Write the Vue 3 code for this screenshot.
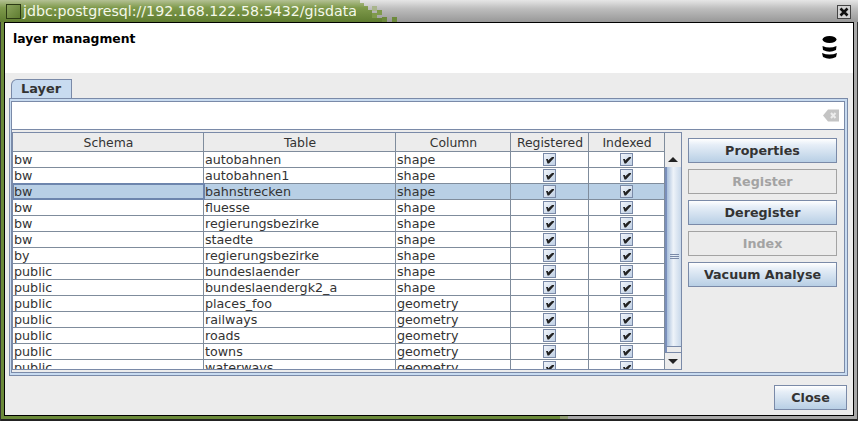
<template>
  <div class="window">
    <div class="titlebar">
      <div class="title-green">
        <span class="app-icon"></span>
        <span class="title">jdbc:postgresql://192.168.122.58:5432/gisdata</span>
      </div>
      <svg class="dither" width="42" height="22" viewBox="0 0 42 22">
        <defs>
          <linearGradient id="olive" x1="0" y1="0" x2="0" y2="22" gradientUnits="userSpaceOnUse">
            <stop offset="0" stop-color="#b4c194" />
            <stop offset="0.35" stop-color="#7f9a4c" />
            <stop offset="1" stop-color="#5f7c30" />
          </linearGradient>
        </defs>
        <path d="M0 0 H4 V3 H8 V6 H12 V10 H16 V14 H20 V18 H26 V22 H0 Z" fill="url(#olive)" />
        <rect v-for="(d, i) in ditherSquares" :key="i" :x="d[0]" :y="d[1]" width="5" height="5" :fill="d[2]" />
      </svg>
      <span class="close-x">
        <svg width="10" height="10" viewBox="0 0 10 10">
          <path d="M1.5 1.5 L8.5 8.5 M8.5 1.5 L1.5 8.5" stroke="#111" stroke-width="2.6" />
        </svg>
      </span>
    </div>
    <div class="content">
      <div class="header">
        <div class="header-title">layer managment</div>
        <svg class="db-icon" width="15" height="23" viewBox="0 0 15 23">
          <ellipse cx="7.5" cy="3.5" rx="7" ry="3.5" fill="#000" />
          <path d="M0.5 10 Q7.5 13 14.5 10 L14 14 Q7.5 17.5 1 14 Z" fill="#000" />
          <path d="M0 17 Q7.5 20 15 17 L14 21 Q7.5 24.5 1 21 Z" fill="#000" />
        </svg>
      </div>
      <div class="main">
        <div class="tab-row">
          <div class="tab">Layer</div>
        </div>
        <div class="tab-pane">
          <div class="pane-inner">
            <div class="search">
              <svg class="clear-icon" width="16" height="13" viewBox="0 0 16 13">
                <path d="M0 6.5 L5 0.5 H16 V12.5 H5 Z" fill="#c4c4c4" />
                <path d="M8 4 L12.5 9 M12.5 4 L8 9" stroke="#ececec" stroke-width="2" />
              </svg>
            </div>
            <div class="split">
              <div class="table-box">
                <div class="table-wrap">
                  <div class="row head">
                    <div v-for="h in headers" :key="h" class="cell">{{ h }}</div>
                  </div>
                  <div v-for="(r, i) in rows" :key="i" class="row" :class="{ selected: i === 2 }">
                    <div class="cell first">{{ r[0] }}</div>
                    <div class="cell">{{ r[1] }}</div>
                    <div class="cell">{{ r[2] }}</div>
                    <div v-for="c in 2" :key="c" class="cell check">
                      <span class="box">
                        <svg width="11" height="11" viewBox="0 0 11 11">
                          <path d="M2 5 H4 V6.5 L8 3 H10 V4 L5 9.5 H3.5 Z" fill="#222" />
                        </svg>
                      </span>
                    </div>
                  </div>
                </div>
                <div class="scrollbar">
                  <div class="corner"></div>
                  <div class="arrow up"><i></i></div>
                  <div class="thumb"><b></b><b></b><b></b></div>
                  <div class="track"></div>
                  <div class="arrow down"><i></i></div>
                </div>
              </div>
              <div class="actions">
                <button class="btn">Properties</button>
                <button class="btn off">Register</button>
                <button class="btn">Deregister</button>
                <button class="btn off">Index</button>
                <button class="btn">Vacuum Analyse</button>
              </div>
            </div>
          </div>
        </div>
        <div class="footer">
          <button class="btn close">Close</button>
        </div>
      </div>
    </div>
  </div>
</template>

<script setup>
const headers = ['Schema', 'Table', 'Column', 'Registered', 'Indexed']

const rows = [
  ['bw', 'autobahnen', 'shape'],
  ['bw', 'autobahnen1', 'shape'],
  ['bw', 'bahnstrecken', 'shape'],
  ['bw', 'fluesse', 'shape'],
  ['bw', 'regierungsbezirke', 'shape'],
  ['bw', 'staedte', 'shape'],
  ['by', 'regierungsbezirke', 'shape'],
  ['public', 'bundeslaender', 'shape'],
  ['public', 'bundeslaendergk2_a', 'shape'],
  ['public', 'places_foo', 'geometry'],
  ['public', 'railways', 'geometry'],
  ['public', 'roads', 'geometry'],
  ['public', 'towns', 'geometry'],
  ['public', 'waterways', 'geometry'],
]

const ditherSquares = [
  [16, 6, '#a9b58c'],
  [16, 13, '#7f9a4c'],
  [21, 10, '#7f9a4c'],
  [26, 17, '#6d8a3c'],
  [36, 17, '#6d8a3c'],
]
</script>

<style>
html, body {
  margin: 0;
  background: #000;
  overflow: hidden;
}
</style>

<style scoped>
.window {
  width: 858px;
  height: 421px;
  box-sizing: border-box;
  display: flex;
  flex-direction: column;
  background: linear-gradient(90deg, #6b8a3a 560px, #8f9c72 560px, #8f9c72 568px, #a8a8a8 568px);
  box-shadow: inset 1px 0 0 #333, inset -1px 0 0 #333, inset 0 -2px 0 #222;
  font-family: "DejaVu Sans", sans-serif;
  font-size: 12.7px;
  color: #333;
}

.titlebar {
  height: 22px;
  flex: none;
  display: flex;
  background: linear-gradient(#e6e6e6, #bdbdbd 40%, #989898);
  position: relative;
}

.title-green {
  width: 360px;
  flex: none;
  display: flex;
  align-items: center;
  background: linear-gradient(#b4c194, #7f9a4c 35%, #5f7c30);
}

.app-icon {
  width: 15px;
  height: 15px;
  margin-left: 6px;
  box-sizing: border-box;
  border: 1px solid #2c3a14;
  background: linear-gradient(135deg, #8aa35c, #5f7c30);
  flex: none;
}

.title {
  padding-left: 2px;
  color: #f4f8ea;
  font-size: 14.2px;
  white-space: nowrap;
}

.dither {
  position: absolute;
  left: 356px;
  top: 0;
}

.close-x {
  position: absolute;
  right: 7px;
  top: 5px;
  width: 14px;
  height: 14px;
  box-sizing: border-box;
  border: 1px solid #444;
  display: flex;
  align-items: center;
  justify-content: center;
  background: #d2d2d2;
}

.content {
  flex: none;
  height: 394px;
  margin: 0 4px;
  border: 1px solid #000;
  box-sizing: border-box;
  background: #ececec;
  display: flex;
  flex-direction: column;
}

.header {
  height: 50px;
  flex: none;
  background: #fff;
  display: flex;
  justify-content: space-between;
  padding: 8px 16px 0 8px;
  box-sizing: border-box;
}

.header-title {
  font-weight: bold;
  font-size: 12.4px;
  color: #000;
}

.db-icon {
  margin-top: 5px;
}

.main {
  flex: 1;
  display: flex;
  flex-direction: column;
  min-height: 0;
}

.tab-row {
  padding: 6px 0 0 6px;
  display: flex;
  height: 25px;
  flex: none;
  box-sizing: border-box;
}

.tab {
  width: 61px;
  box-sizing: border-box;
  border: 1px solid #7a8aa8;
  border-bottom: none;
  border-top-left-radius: 6px;
  background: #c8dbf0;
  font-weight: bold;
  font-size: 12.9px;
  text-align: center;
  line-height: 18px;
  padding-right: 1px;
}

.tab-pane {
  flex: none;
  height: 278px;
  margin: 0 5px 0 4px;
  border: 1px solid #7a8aa8;
  background: #c8dbf0;
  padding: 2px 2px 2px 1px;
  box-sizing: border-box;
}

.pane-inner {
  height: 100%;
  box-sizing: border-box;
  border: 1px solid #7a8aa8;
  background: #ececec;
  display: flex;
  flex-direction: column;
}

.search {
  height: 28px;
  flex: none;
  border-bottom: 1px solid #7a8aa8;
  background: #fff;
  box-sizing: border-box;
  display: flex;
  align-items: center;
  justify-content: flex-end;
  padding-right: 5px;
}

.split {
  flex: 1;
  display: flex;
  min-height: 0;
}

.table-box {
  width: 670px;
  height: 238px;
  flex: none;
  margin-top: 2px;
  border: 1px solid #7a8aa8;
  box-sizing: border-box;
  display: flex;
  overflow: hidden;
}

.table-wrap {
  width: 652px;
  flex: none;
  background: #fff;
  overflow: hidden;
}

.row {
  display: grid;
  grid-template-columns: 191px 192px 115px 78px 76px;
  height: 16px;
  box-sizing: border-box;
  border-bottom: 1px solid #7f8c9c;
  line-height: 15px;
  color: #333;
}

.row.selected {
  background: #b8cfe5;
}

.cell {
  padding-left: 1px;
  border-right: 1px solid #7f8c9c;
  white-space: nowrap;
  overflow: hidden;
  box-sizing: border-box;
}

.row.selected .first {
  outline: 2px solid #6d85ad;
  outline-offset: -1px;
  overflow: visible;
}

.row.head {
  height: 19px;
  background: #ececec;
  line-height: 19px;
  font-size: 12.4px;
}

.head .cell {
  text-align: center;
  padding-left: 1px;
}

.check {
  display: flex;
  align-items: center;
  justify-content: center;
  padding-left: 0;
}

.box {
  width: 13px;
  height: 13px;
  box-sizing: border-box;
  border: 1px solid #7a8aa8;
  background: linear-gradient(135deg, #f0f4fa, #c0d0e4);
  display: flex;
  align-items: center;
  justify-content: center;
}

.scrollbar {
  width: 16px;
  flex: none;
  display: flex;
  flex-direction: column;
  background: #ececec;
}

.corner {
  height: 19px;
  flex: none;
}

.arrow {
  height: 15px;
  flex: none;
  display: flex;
  align-items: center;
  justify-content: center;
  box-sizing: border-box;
}

.arrow i {
  width: 0;
  height: 0;
  border-left: 5px solid transparent;
  border-right: 5px solid transparent;
}

.up i {
  border-bottom: 5px solid #222;
}

.down {
  border-top: 1px solid #7a8aa8;
  height: 17px;
}

.down i {
  border-top: 5px solid #222;
}

.thumb {
  height: 180px;
  flex: none;
  box-sizing: border-box;
  border-left: 2px solid #7a8fbb;
  border-bottom: 1px solid #7a8aa8;
  background: linear-gradient(90deg, #a9c0dc, #eef3f9 45%, #c8d8ea);
  display: flex;
  flex-direction: column;
  justify-content: center;
  align-items: center;
  gap: 1px;
}

.track {
  flex: 1;
  border-left: 2px solid #7a8fbb;
}

.thumb b {
  width: 9px;
  height: 1px;
  background: #7a8aa8;
}

.actions {
  flex: 1;
  display: flex;
  flex-direction: column;
  gap: 6px;
  padding: 8px 0 0 6px;
  box-sizing: border-box;
}

.btn {
  width: 149px;
  height: 25px;
  flex: none;
  padding: 0;
  border: 1px solid #7a8aa8;
  background: linear-gradient(#fff, #e6eef7 25%, #b8cfe5);
  font-family: "DejaVu Sans", sans-serif;
  font-size: 12.7px;
  font-weight: bold;
  color: #333;
}

.btn.off {
  background: #ececec;
  border-color: #a3a3a3;
  color: #a3a3a3;
}

.footer {
  flex: 1;
  display: flex;
  justify-content: flex-end;
  align-items: flex-start;
  padding: 9px 6px 0 0;
}

.btn.close {
  width: 73px;
}
</style>
